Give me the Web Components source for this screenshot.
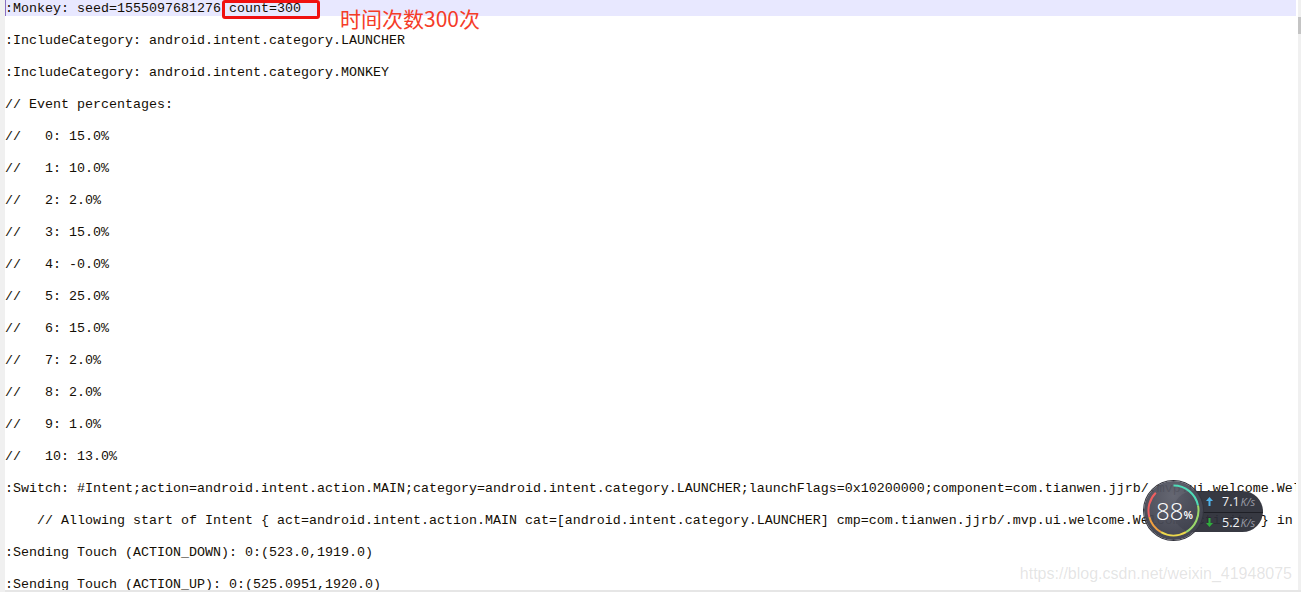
<!DOCTYPE html>
<html lang="zh">
<head>
<meta charset="utf-8">
<title>monkey log</title>
<style>
  html,body{margin:0;padding:0;height:100%;overflow:hidden;background:#fff;}
</style>
</head>
<body>
<log-window>
  <log-line current>:Monkey: seed=1555097681276 count=300</log-line>
  <log-line>:IncludeCategory: android.intent.category.LAUNCHER</log-line>
  <log-line>:IncludeCategory: android.intent.category.MONKEY</log-line>
  <log-line>// Event percentages:</log-line>
  <log-line>//   0: 15.0%</log-line>
  <log-line>//   1: 10.0%</log-line>
  <log-line>//   2: 2.0%</log-line>
  <log-line>//   3: 15.0%</log-line>
  <log-line>//   4: -0.0%</log-line>
  <log-line>//   5: 25.0%</log-line>
  <log-line>//   6: 15.0%</log-line>
  <log-line>//   7: 2.0%</log-line>
  <log-line>//   8: 2.0%</log-line>
  <log-line>//   9: 1.0%</log-line>
  <log-line>//   10: 13.0%</log-line>
  <log-line>:Switch: #Intent;action=android.intent.action.MAIN;category=android.intent.category.LAUNCHER;launchFlags=0x10200000;component=com.tianwen.jjrb/.mvp.ui.welcome.WelcomeActivity;end</log-line>
  <log-line>    // Allowing start of Intent { act=android.intent.action.MAIN cat=[android.intent.category.LAUNCHER] cmp=com.tianwen.jjrb/.mvp.ui.welcome.WelcomeActivity } in package com.tianwen.jjrb</log-line>
  <log-line>:Sending Touch (ACTION_DOWN): 0:(523.0,1919.0)</log-line>
  <log-line>:Sending Touch (ACTION_UP): 0:(525.0951,1920.0)</log-line>
  <red-note slot="over"></red-note>
  <speed-ball slot="over"></speed-ball>
  <water-mark slot="over">https://blog.csdn.net/weixin_41948075</water-mark>
</log-window>

<script>
class LogWindow extends HTMLElement {
  constructor() {
    super();
    this.attachShadow({ mode: "open" });
    this.shadowRoot.innerHTML = `
      <style>
      :host{
        display:grid;
        grid-template-columns:5px 1fr 3px;
        grid-template-rows:590px 2px;
        width:1301px;
        height:592px;
        position:relative;
        overflow:hidden;
        background:#fff;
      }
      .gutter{background:#f0f0f0;grid-row:1 / 3;}
      .lines{overflow:hidden;min-width:0;display:flex;flex-direction:column;}
      .scroll{background:#f0f0f0;padding-top:17px;}
      .thumb{height:17px;background:#c4c4c4;}
      .bottom{grid-column:2 / 4;background:#e6e6e6;}
      </style>
      <div class="gutter"></div>
      <div class="lines"><slot></slot></div>
      <div class="scroll"><div class="thumb"></div></div>
      <div class="bottom"></div>
      <slot name="over"></slot>
    `;
  }
}
customElements.define("log-window", LogWindow);

class LogLine extends HTMLElement {
  constructor() {
    super();
    this.attachShadow({ mode: "open" });
    this.shadowRoot.innerHTML = `
      <style>
      :host{
        display:block;
        flex:none;
        height:32px;
        font:13.33px/18px "Liberation Mono","Courier New",monospace;
        color:#140e04;
      }
      .row{height:16px;width:1291px;overflow:hidden;white-space:pre;}
      :host([current]) .row{background:#e8e8ff;box-shadow:inset 1px 0 0 #8a6fc0;}
      </style>
      <div class="row"><slot></slot></div>
    `;
  }
}
customElements.define("log-line", LogLine);

class RedNote extends HTMLElement {
  constructor() {
    super();
    this.attachShadow({ mode: "open" });
    this.shadowRoot.innerHTML = `
      <style>
      :host{position:absolute;left:222px;top:0;display:flex;align-items:flex-start;}
      .box{width:92px;height:13px;border:3px solid #f01010;border-radius:3px;margin-right:20px;}
      .text{font:21px/24px "Noto Sans CJK SC","Noto Sans",sans-serif;color:#f53c28;margin-top:6px;white-space:nowrap;}
      </style>
      <div class="box"></div>
      <div class="text">时间次数300次</div>
    `;
  }
}
customElements.define("red-note", RedNote);

class SpeedBall extends HTMLElement {
  constructor() {
    super();
    this.attachShadow({ mode: "open" });
    this.shadowRoot.innerHTML = `
      <style>
      :host{position:absolute;left:1144px;top:481px;width:120px;height:60px;display:block;font-family:"Open Sans","Liberation Sans",sans-serif;}
      .pill{position:absolute;left:29px;top:10px;width:90px;height:41px;border-radius:21px;background:rgba(44,46,56,.95);
        display:grid;grid-template-rows:1fr 1fr;}
      .rate{display:flex;align-items:center;padding-left:33px;color:#f4f4f6;font-size:12.5px;gap:9px;}
      .rate + .rate{border-top:1px solid rgba(25,26,32,.8);}
      .rate i{font-style:italic;font-size:11px;color:#9a9ca6;margin-left:1px;}
      .rate svg{width:7px;height:9px;flex:none;}
      .ball{position:absolute;left:0;top:0;width:59px;height:59px;border-radius:50%;
        background:radial-gradient(circle at 50% 25%,rgba(92,94,106,.94),rgba(62,64,76,.96) 78%);box-shadow:0 0 0 1px #33343d;
        display:flex;align-items:center;justify-content:center;color:#fff;}
      .ball svg{position:absolute;left:0;top:0;}
      .num{font-size:24px;font-weight:300;line-height:1;margin-left:2px;}
      .pct{font-size:11px;font-weight:600;align-self:flex-end;margin-bottom:18px;}
      </style>
      <div class="pill">
        <div class="rate">
          <svg viewBox="0 0 7 9"><path d="M3.500 0 7 4H4.500V9H2.500V4H0Z" fill="#4fb4ea"/></svg>
          <span>7.1<i>K/s</i></span>
        </div>
        <div class="rate">
          <svg viewBox="0 0 7 9"><path d="M3.500 9 7 5H4.500V0H2.500V5H0Z" fill="#2fae3c"/></svg>
          <span>5.2<i>K/s</i></span>
        </div>
      </div>
      <div class="ball">
        <svg width="59" height="59" viewBox="0 0 59 59" fill="none" stroke-width="2">
          <path d="M29.5 4.500A25 25 0 0 1 54 24.500" stroke="#4fdcb8"/>
          <path d="M54 24.500A25 25 0 0 1 42 51.150" stroke="#9bd86a"/>
          <path d="M42 51.150A25 25 0 0 1 17 51.150" stroke="#ecd84c"/>
          <path d="M17 51.150A25 25 0 0 1 5.300 36" stroke="#f0a040"/>
          <path d="M5.300 36A25 25 0 0 1 11.800 11.800" stroke="#ee5f5f"/>
        </svg>
        <span class="num">88</span><span class="pct">%</span>
      </div>
    `;
  }
}
customElements.define("speed-ball", SpeedBall);

class WaterMark extends HTMLElement {
  constructor() {
    super();
    this.attachShadow({ mode: "open" });
    this.shadowRoot.innerHTML = `
      <style>
      :host{position:absolute;right:9px;top:564px;font:16px/20px "Liberation Sans",Arial,sans-serif;color:rgba(120,120,120,.2);white-space:nowrap;}
      </style>
      <slot></slot>
    `;
  }
}
customElements.define("water-mark", WaterMark);
</script>
</body>
</html>
